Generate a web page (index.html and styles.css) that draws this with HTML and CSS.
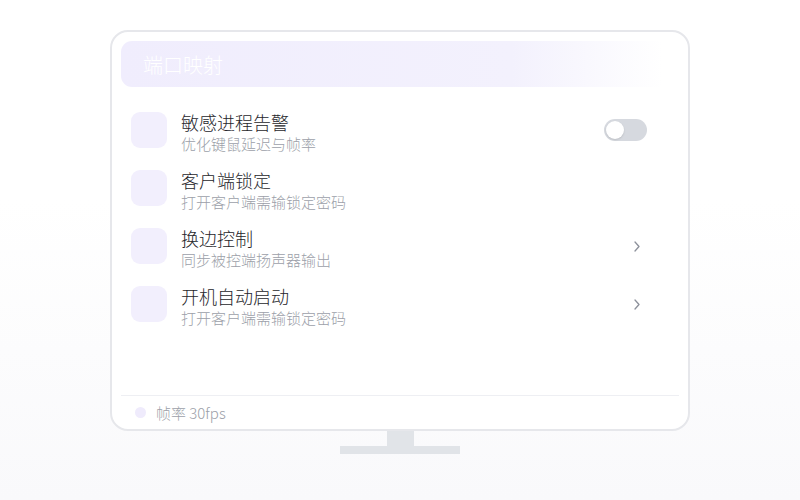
FILE: index.html
```html
<!DOCTYPE html>
<html lang="zh-CN">
<head>
    <meta charset="UTF-8">
    <meta name="viewport" content="width=device-width, initial-scale=1.0">
    <title>端口映射</title>
    <link rel="stylesheet" href="styles.css">
</head>
<body>
    <div class="screen">
        <div class="monitor">
            <div class="header">端口映射</div>

            <div class="list">
                <div class="row">
                    <div class="icon"></div>
                    <div class="text">
                        <div class="title">敏感进程告警</div>
                        <div class="sub">优化键鼠延迟与帧率</div>
                    </div>
                    <div class="toggle"><span class="knob"></span></div>
                </div>
                <div class="row">
                    <div class="icon"></div>
                    <div class="text">
                        <div class="title">客户端锁定</div>
                        <div class="sub">打开客户端需输锁定密码</div>
                    </div>
                </div>
                <div class="row">
                    <div class="icon"></div>
                    <div class="text">
                        <div class="title">换边控制</div>
                        <div class="sub">同步被控端扬声器输出</div>
                    </div>
                    <svg class="chevron" width="6" height="11" viewBox="0 0 6 11">
                        <path d="M1 1 L5 5.5 L1 10" fill="none" stroke="#8d919b" stroke-width="1.3" stroke-linecap="round" stroke-linejoin="round"/>
                    </svg>
                </div>
                <div class="row">
                    <div class="icon"></div>
                    <div class="text">
                        <div class="title">开机自动启动</div>
                        <div class="sub">打开客户端需输锁定密码</div>
                    </div>
                    <svg class="chevron" width="6" height="11" viewBox="0 0 6 11">
                        <path d="M1 1 L5 5.5 L1 10" fill="none" stroke="#8d919b" stroke-width="1.3" stroke-linecap="round" stroke-linejoin="round"/>
                    </svg>
                </div>
            </div>

            <div class="footer">
                <span class="dot"></span>
                <span>帧率 30fps</span>
            </div>
        </div>
        <div class="neck"></div>
        <div class="base"></div>
    </div>
</body>
</html>
```

FILE: styles.css
```css
html, body {
    margin: 0;
    height: 100%;
}
body {
    background: linear-gradient(#ffffff 0%, #ffffff 40%, #f9f9fb 100%);
    font-family: "Noto Sans CJK SC", "Noto Sans", sans-serif;
    font-weight: 300;
}
.screen {
    display: flex;
    flex-direction: column;
    align-items: center;
    padding-top: 30px;
}
.monitor {
    width: 580px;
    height: 401px;
    box-sizing: border-box;
    border: 2px solid #e6e7eb;
    border-radius: 18px;
    background: #fff;
    padding: 9px 9px 0;
    display: flex;
    flex-direction: column;
}
.header {
    height: 46px;
    border-radius: 11px;
    background: linear-gradient(90deg, #f0edfd 0%, #f3f1fd 70%, #ffffff 97%);
    color: #fff;
    font-size: 20px;
    line-height: 48px;
    padding-left: 22px;
}
.list {
    padding: 24px 32px 0 10px;
    display: flex;
    flex-direction: column;
    gap: 15px;
}
.row {
    display: flex;
    align-items: flex-start;
    height: 43px;
}
.icon {
    width: 36px;
    height: 36px;
    margin-top: 1px;
    border-radius: 9px;
    background: #f2effd;
    flex-shrink: 0;
}
.text {
    flex: 1;
    margin-left: 14px;
}
.title {
    font-size: 18px;
    line-height: 23px;
    color: #26262b;
}
.sub {
    font-size: 15px;
    line-height: 20px;
    color: #9c9fa9;
}
.toggle {
    margin-top: 8px;
    width: 43px;
    height: 22px;
    border-radius: 11px;
    background: #d6d9df;
    display: flex;
    align-items: center;
    padding-left: 2px;
    box-sizing: border-box;
}
.knob {
    width: 18px;
    height: 18px;
    border-radius: 50%;
    background: #fff;
    box-shadow: 0 1px 2px rgba(0, 0, 0, 0.12);
}
.chevron {
    margin-top: 14px;
    margin-right: 7px;
}
.footer {
    margin-top: auto;
    border-top: 1px solid #eeeff3;
    height: 33px;
    display: flex;
    align-items: center;
    padding-left: 14px;
    gap: 10px;
    font-size: 15px;
    color: #9c9fa9;
}
.dot {
    width: 11px;
    height: 11px;
    border-radius: 50%;
    background: #efebfc;
}
.neck {
    width: 27px;
    height: 15px;
    background: #e1e4e8;
}
.base {
    width: 120px;
    height: 8px;
    background: #e1e4e8;
}
```
